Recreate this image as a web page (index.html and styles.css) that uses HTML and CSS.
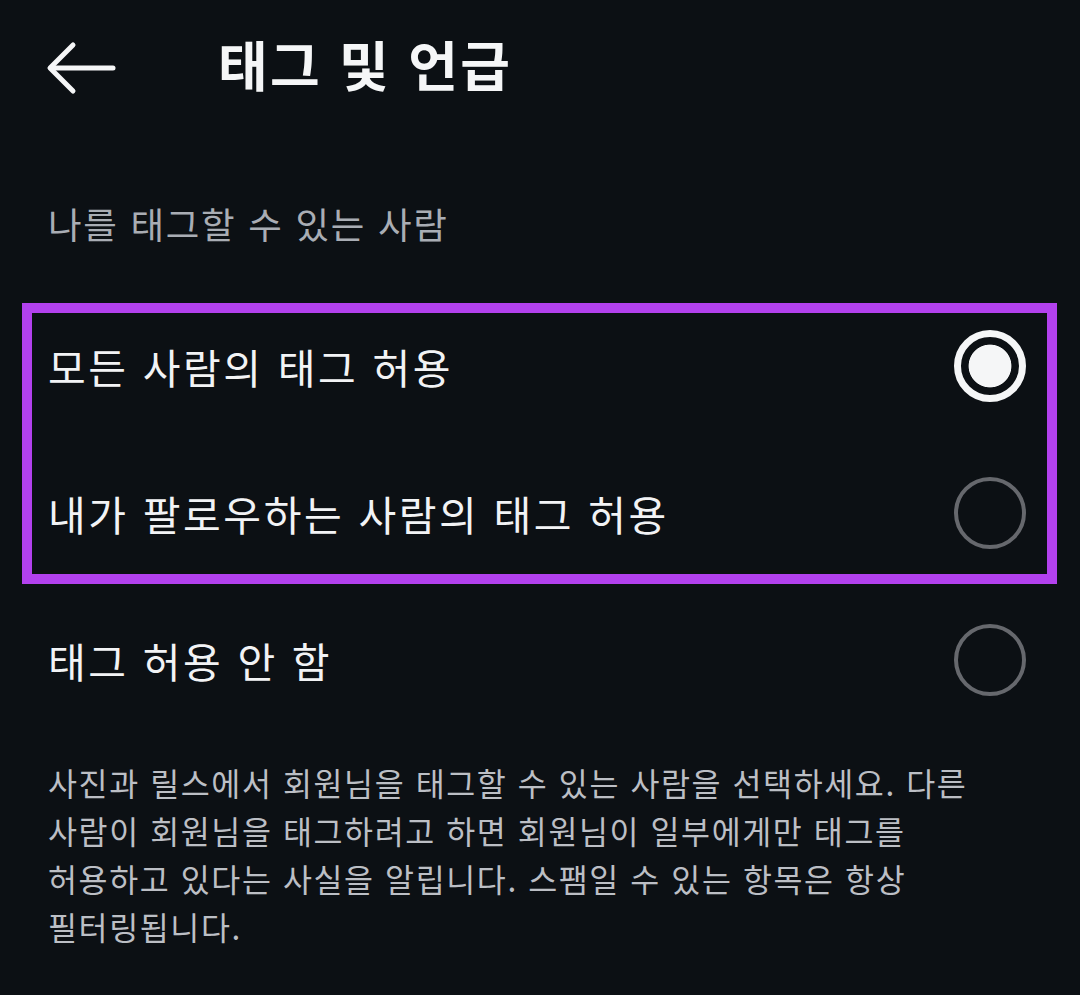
FILE: index.html
```html
<!DOCTYPE html>
<html lang="ko">
<head>
<meta charset="utf-8">
<link rel="stylesheet" href="styles.css">
</head>
<body>
<div class="page">
  <header class="header">
    <svg class="back" width="72" height="72" viewBox="0 0 72 72" fill="none" stroke="#f5f6f7" stroke-width="5" stroke-linecap="round" stroke-linejoin="round">
      <path d="M67 36 H5"/>
      <path d="M27 13 L4 36 L27 59"/>
    </svg>
    <h1 class="title">태그 및 언급</h1>
  </header>
  <div class="label">나를 태그할 수 있는 사람</div>
  <div class="box">
    <div class="row">
      <span class="opt">모든 사람의 태그 허용</span>
      <span class="radio on"></span>
    </div>
    <div class="row">
      <span class="opt">내가 팔로우하는 사람의 태그 허용</span>
      <span class="radio"></span>
    </div>
  </div>
  <div class="row outside">
    <span class="opt">태그 허용 안 함</span>
    <span class="radio"></span>
  </div>
  <p class="desc">사진과 릴스에서 회원님을 태그할 수 있는 사람을 선택하세요. 다른<br>사람이 회원님을 태그하려고 하면 회원님이 일부에게만 태그를<br>허용하고 있다는 사실을 알립니다. 스팸일 수 있는 항목은 항상<br>필터링됩니다.</p>
</div>
</body>
</html>
```
FILE: styles.css
```css
html, body {
  margin: 0;
  padding: 0;
  background: #0c1014;
}
body {
  width: 1080px;
  height: 995px;
  overflow: hidden;
  font-family: "Noto Sans CJK KR", "Noto Sans", sans-serif;
}
.header {
  display: flex;
  align-items: center;
  height: 136px;
  padding-left: 46px;
}
.back {
  display: block;
  flex: none;
}
.title {
  margin: 0 0 8px 100px;
  font-size: 54px;
  font-weight: 700;
  letter-spacing: 2.2px;
  color: #f5f6f7;
  line-height: 1;
}
.label {
  margin-top: 64px;
  padding-left: 48px;
  font-size: 36.5px;
  letter-spacing: 1.7px;
  line-height: 48px;
  color: #a9adb4;
}
.box {
  margin: 55px 23px 0 22px;
  border: 10px solid #b341ee;
  padding: 0 21px 8px 16px;
  display: flex;
  flex-direction: column;
  gap: 41px;
}
.row {
  height: 106px;
  display: flex;
  align-items: center;
  justify-content: space-between;
}
.row.outside {
  margin: 23px 54px 0 48px;
}
.opt {
  font-size: 41px;
  letter-spacing: 2.6px;
  color: #f2f3f5;
  line-height: 1;
}
.radio {
  box-sizing: border-box;
  width: 72px;
  height: 72px;
  border-radius: 50%;
  border: 4px solid #66686d;
  flex: none;
}
.radio.on {
  border: 7px solid #f5f6f7;
  background: radial-gradient(circle, #f5f6f7 0 21px, #0c1014 21.8px);
}
.desc {
  margin: 45px 0 0 48px;
  font-size: 31.5px;
  letter-spacing: 1.6px;
  line-height: 48px;
  color: #bcbfc5;
}
```
